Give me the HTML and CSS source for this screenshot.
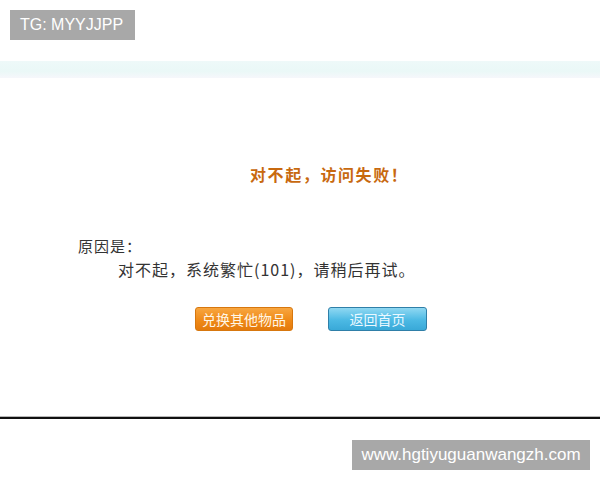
FILE: index.html
```html
<!DOCTYPE html>
<html lang="zh">
<head>
<meta charset="utf-8">
<link rel="stylesheet" href="styles.css">
</head>
<body>
<div class="page">
  <div class="top">
    <span class="tag">TG: MYYJJPP</span>
  </div>
  <div class="band"></div>
  <div class="content">
    <h1 class="title">对不起，访问失败！</h1>
    <p class="reason">原因是：</p>
    <p class="detail">对不起，系统繁忙(101)，请稍后再试。</p>
    <div class="buttons">
      <span class="btn btn-orange">兑换其他物品</span>
      <span class="btn btn-blue">返回首页</span>
    </div>
  </div>
  <div class="rule"></div>
  <div class="bottom">
    <span class="site">www.hgtiyuguanwangzh.com</span>
  </div>
</div>
</body>
</html>
```
FILE: styles.css
```css
html, body {
  margin: 0;
  padding: 0;
  background: #ffffff;
}
.page {
  width: 600px;
  height: 480px;
  overflow: hidden;
  display: flex;
  flex-direction: column;
  font-family: "Noto Sans CJK SC", "Liberation Sans", sans-serif;
}
.top {
  height: 61px;
  padding: 10px 0 0 10px;
  box-sizing: border-box;
}
.tag {
  display: inline-flex;
  align-items: center;
  height: 30px;
  width: 125px;
  padding-left: 10px;
  box-sizing: border-box;
  background: #a8a8a8;
  color: #ffffff;
  font-family: "Liberation Sans", Arial, sans-serif;
  font-size: 16px;
}
.band {
  height: 17px;
  background: linear-gradient(to bottom, #eef9f9, #eaf8f7 60%, #f6f7fb);
}
.content {
  height: 338px;
  display: flex;
  flex-direction: column;
}
.title {
  margin: 86px 0 0 250px;
  font-size: 16px;
  font-weight: bold;
  color: #c8690f;
  line-height: 20px;
  letter-spacing: 1.6px;
}
.reason {
  margin: 52px 0 0 78px;
  font-size: 15px;
  line-height: 20px;
  color: #333333;
  letter-spacing: 1px;
}
.detail {
  margin: 3px 0 0 118px;
  font-size: 16px;
  line-height: 20px;
  color: #333333;
  letter-spacing: 1px;
}
.buttons {
  display: flex;
  gap: 35px;
  margin: 28px 0 0 195px;
}
.btn {
  display: inline-flex;
  align-items: center;
  justify-content: center;
  height: 24px;
  box-sizing: border-box;
  border-radius: 3px;
  font-size: 14px;
  color: #fff6e6;
}
.btn-orange {
  width: 98px;
  background: linear-gradient(to bottom, #f8a640, #ef8a18 55%, #e47a0c);
  border: 1px solid #d7770e;
}
.btn-blue {
  width: 99px;
  background: linear-gradient(to bottom, #8fd8f2, #4cb9e4 55%, #39a9d8);
  border: 1px solid #2f7fa8;
  color: #eaf8ff;
}
.rule {
  height: 1px;
  background: #b8b8b8;
  border-bottom: 2px solid #111111;
}
.bottom {
  display: flex;
  justify-content: flex-end;
  padding: 21px 10px 0 0;
}
.site {
  display: inline-flex;
  align-items: center;
  justify-content: center;
  height: 30px;
  width: 238px;
  background: #a8a8a8;
  color: #ffffff;
  font-family: "Liberation Sans", Arial, sans-serif;
  font-size: 17px;
}
```
